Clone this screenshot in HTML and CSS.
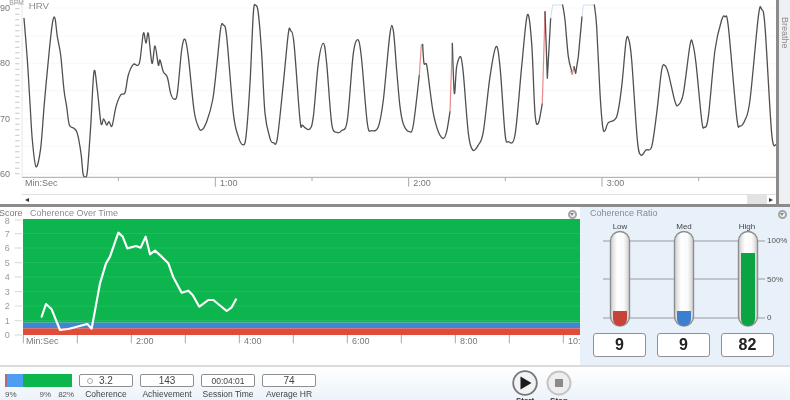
FILE: index.html
```html
<!DOCTYPE html>
<html lang="en">
<head>
<meta charset="utf-8">
<title>HRV Session</title>
<link rel="stylesheet" href="styles.css">
<script src="chart.js" defer></script>
</head>
<body>
<div class="app">
  <section class="hrv">
    <div class="hrv-main">
      <svg class="hrv-chart" viewBox="0 0 2328 582" aria-label="HRV chart">
        <path class="grid" d="M66 24H2328M66 190H2328M66 356H2328M66 522H2328M66 108H2328M66 272H2328M66 438H2328"/>
        <path class="axis-y" d="M66 0V532"/>
        <path class="ticks" d="M52 8V530"/>
        <text class="ax" x="0" y="33">90</text>
        <text class="ax" x="0" y="199">80</text>
        <text class="ax" x="0" y="365">70</text>
        <text class="ax" x="0" y="531">60</text>
        <text class="ax small" x="28" y="15">BPM</text>
        <text class="ax title" x="86" y="28">HRV</text>
        <polyline class="trace" points="72,55 82,180 90,310 97,420 108,500 122,445 133,310 148,150 158,65 165,55 172,110 182,165 192,270 200,320 208,375 222,385 232,400 243,460 249,520 255,530 262,515 272,380 282,215 292,270 303,370 311,357 320,375 327,365 336,378 348,320 362,285 375,278 385,225 400,193 418,190 430,100 438,130 445,100 456,190 465,138 475,195 480,180 490,215 502,232 512,280 522,297 532,280 545,150 555,118 565,170 582,330 595,380 605,390 620,365 638,300 650,200 662,85 670,75 680,110 700,340 715,410 728,434 738,410 750,250 760,40 767,16 775,40 785,160 795,340 810,415 820,428 832,415 850,250 865,100 872,92 882,130 900,360 908,376 928,388 940,350 955,190 970,130 980,190 995,370 1010,397 1025,392 1042,360 1060,160 1075,120 1085,180 1102,370 1115,392 1135,380 1150,300 1170,100 1180,92 1190,210 1200,320 1210,372 1228,395 1240,375 1258,225"/>
        <g transform="translate(1200 0)">
          <polyline class="trace-red" points="58,225 64,135 68,133"/>
          <polyline class="trace" points="68,133 72,190 80,195 90,270 100,340 115,395 130,415 140,395 150,335"/>
          <polyline class="trace-red" points="150,335 157,130"/>
          <polyline class="trace" points="157,130 163,280 170,200 182,170 190,220 205,400 218,450 235,435 250,395 270,230 288,140 300,200 315,400 325,425 345,405 365,200 382,45 395,130 405,340 415,370 427,310"/>
          <polyline class="trace-red" points="427,310 435,35"/>
          <polyline class="trace-raw" points="435,35 442,235 452,55"/>
          <polyline class="trace-pale" points="452,55 458,15 488,15"/>
          <polyline class="trace" points="488,15 495,60 505,170 517,220"/>
          <polyline class="trace-red" points="513,215 517,224 522,200"/>
          <polyline class="trace-raw" points="522,200 527,220 535,170 546,50"/>
          <polyline class="trace-pale" points="546,50 550,15 583,15"/>
          <polyline class="trace" points="583,15 590,80 600,280 608,380 615,392 625,368 650,350 665,260 678,125 686,118 695,180 712,420 723,465 738,450 755,440 770,340 785,210 795,197 805,220 825,305 835,315 850,280 870,135 878,130 888,190 905,360 913,382 925,350 945,150 965,60 975,50 985,80 1010,350 1020,378 1035,360 1050,300 1075,50 1085,28 1095,80 1115,400 1128,435"/>
        </g>
        <path class="x-line" d="M66 532H2328"/>
        <path class="x-ticks" d="M355 532V543M646 532V560M936 532V543M1226 532V560M1516 532V543M1806 532V560M2096 532V543"/>
        <text class="ax" x="75" y="558">Min:Sec</text>
        <text class="ax" x="660" y="558">1:00</text>
        <text class="ax" x="1240" y="558">2:00</text>
        <text class="ax" x="1820" y="558">3:00</text>
      </svg>
      <div class="scrollbar">
        <span class="arrow">&#9666;</span>
        <span class="thumb"></span>
        <span class="arrow">&#9656;</span>
      </div>
    </div>
    <div class="breathe"><span>Breathe</span></div>
  </section>

  <section class="middle">
    <div class="coh">
      <div class="panel-head">
        <span class="score">Score</span>
        <span class="panel-title">Coherence Over Time</span>
        <span class="drop"></span>
      </div>
      <svg class="coh-chart" viewBox="0 57 1740 435" aria-label="Coherence over time chart">
        <rect class="green" x="69" y="57" width="1671" height="311"/>
        <rect class="blue" x="69" y="368" width="1671" height="17"/>
        <rect class="red" x="69" y="385" width="1671" height="20"/>
        <path class="green-grid" d="M69 101H1740M69 144H1740M69 188H1740M69 231H1740M69 275H1740M69 318H1740M69 362H1740"/>
        <path class="y-ticks" d="M44 60H66M44 101H66M44 144H66M44 188H66M44 231H66M44 275H66M44 318H66M44 362H66M44 405H66"/>
        <text class="ax light" x="14" y="72">8</text>
        <text class="ax light" x="14" y="110">7</text>
        <text class="ax light" x="14" y="153">6</text>
        <text class="ax light" x="14" y="197">5</text>
        <text class="ax light" x="14" y="240">4</text>
        <text class="ax light" x="14" y="284">3</text>
        <text class="ax light" x="14" y="327">2</text>
        <text class="ax light" x="14" y="371">1</text>
        <text class="ax light" x="14" y="414">0</text>
        <polyline class="coh-line" points="125,350 138,312 155,328 180,390 205,387 262,372 275,386 300,250 318,190 330,170 355,98 368,110 382,145 408,138 422,143 437,110 450,163 465,152 485,170 505,190 520,232 545,278 565,272 578,285 598,320 625,300 640,300 680,333 695,322 708,298"/>
        <path class="x-ticks" d="M70 405V430M232 405V430M394 405V430M556 405V430M718 405V430M880 405V430M1042 405V430M1204 405V430M1366 405V430M1528 405V430M1690 405V430"/>
        <text class="ax" x="78" y="432">Min:Sec</text>
        <text class="ax" x="408" y="432">2:00</text>
        <text class="ax" x="732" y="432">4:00</text>
        <text class="ax" x="1056" y="432">6:00</text>
        <text class="ax" x="1380" y="432">8:00</text>
        <text class="ax" x="1704" y="432">10:00</text>
      </svg>
    </div>

    <div class="ratio">
      <div class="panel-head ratio-head">
        <span class="panel-title">Coherence Ratio</span>
        <span class="drop"></span>
      </div>
      <svg class="gauges" viewBox="0 0 210 107" aria-label="Coherence ratio gauges">
        <defs>
          <linearGradient id="tube">
            <stop offset="0" stop-color="#cfcfcf"/>
            <stop offset=".35" stop-color="#ffffff"/>
            <stop offset=".7" stop-color="#fafafa"/>
            <stop offset="1" stop-color="#cccccc"/>
          </linearGradient>
        </defs>
        <path class="g-line" d="M23 17H185M23 55H185M23 94H185"/>
        <rect class="tube" x="30.5" y="7.5" width="19" height="94.5" rx="9.5"/>
        <rect class="tube" x="94.5" y="7.5" width="19" height="94.5" rx="9.5"/>
        <rect class="tube" x="158.5" y="7.5" width="19" height="94.5" rx="9.5"/>
        <path class="f-red" d="M33 87H47V95A7 7 0 0 1 33 95Z"/>
        <path class="f-blue" d="M97 87H111V95A7 7 0 0 1 97 95Z"/>
        <path class="f-green" d="M161 29H175V95A7 7 0 0 1 161 95Z"/>
        <text class="g-lab" x="40" y="5">Low</text>
        <text class="g-lab" x="104" y="5">Med</text>
        <text class="g-lab" x="167" y="5">High</text>
        <text class="g-scale" x="187" y="19">100%</text>
        <text class="g-scale" x="187" y="58">50%</text>
        <text class="g-scale" x="187" y="96">0</text>
      </svg>
      <div class="values">
        <div class="value">9</div>
        <div class="value">9</div>
        <div class="value">82</div>
      </div>
    </div>
  </section>

  <footer class="footer">
    <div class="summary">
      <div class="stack"><i class="s-red"></i><i class="s-blue"></i><i class="s-green"></i></div>
      <div class="stack-labels"><span>9%</span><span>9%</span><span>82%</span></div>
    </div>
    <div class="metric"><div class="box coh-box"><i class="dot"></i>3.2</div><span>Coherence</span></div>
    <div class="metric"><div class="box">143</div><span>Achievement</span></div>
    <div class="metric"><div class="box small-val">00:04:01</div><span>Session Time</span></div>
    <div class="metric"><div class="box">74</div><span>Average HR</span></div>
    <div class="controls">
      <div class="ctrl">
        <svg class="btn" viewBox="0 0 26 26"><circle class="btn-ring" cx="13" cy="13" r="11.8"/><path class="btn-play" d="M8.5 6.5L19.5 13L8.5 19.5Z"/></svg>
        <span>Start</span>
      </div>
      <div class="ctrl">
        <svg class="btn" viewBox="0 0 26 26"><circle class="btn-ring off" cx="13" cy="13" r="11.5"/><rect class="btn-stop" x="9" y="9" width="8" height="8"/></svg>
        <span>Stop</span>
      </div>
    </div>
  </footer>
</div>
</body>
</html>
```
FILE: styles.css
```css
* { box-sizing: border-box; }
html, body { margin: 0; padding: 0; background: #fff; }
body { width: 790px; height: 400px; overflow: hidden; font-family: "Liberation Sans", Arial, sans-serif; }
.app { width: 790px; height: 400px; display: flex; flex-direction: column; filter: blur(.45px); color: #555; }

.hrv { height: 207px; display: flex; border-bottom: 3px solid #8b8b8b; flex: none; }
.hrv-main { width: 776px; display: flex; flex-direction: column; }
.hrv-chart { width: 776px; height: 194px; display: block; flex: none; }
.grid { stroke: #f3f3f3; stroke-width: 2; fill: none; }
.axis-y { stroke: #dcdcdc; stroke-width: 2; fill: none; }
.ticks { stroke: #c8c8c8; stroke-width: 13; stroke-dasharray: 3 13.5; fill: none; }
.ax { font-size: 27px; fill: #777; }
.ax.light { fill: #999; }
.ax.small { font-size: 20px; fill: #999; }
.ax.title { font-size: 29px; fill: #8a8a8a; }
.trace, .trace-raw { fill: none; stroke: #505050; stroke-width: 3.9; stroke-linejoin: round; stroke-linecap: round; }
.trace-red { fill: none; stroke: #e78a8a; stroke-width: 3.6; stroke-linecap: round; stroke-linejoin: round; }
.trace-pale { fill: none; stroke: #cfdcf0; stroke-width: 3; stroke-linejoin: round; }
.x-line { stroke: #a8a8a8; stroke-width: 3; fill: none; }
.x-ticks { stroke: #a8a8a8; stroke-width: 3; fill: none; }

.scrollbar { height: 10px; margin-left: 22px; display: flex; align-items: center; justify-content: space-between; border-top: 1px solid #e0e0e0; padding: 0 1px 0 1px; font-size: 8px; color: #333; line-height: 1; }
.scrollbar .arrow { flex: none; width: 8px; text-align: center; }
.scrollbar .thumb { margin-left: auto; width: 20px; height: 9px; background: #e2e4e4; }
.breathe { width: 14px; border-left: 3px solid #8b8b8b; background: #eef1f4; display: flex; justify-content: flex-start; padding: 17px 0 0 1px; }
.breathe span { writing-mode: vertical-rl; font-size: 9px; color: #8a8a8a; }

.middle { display: flex; height: 158px; flex: none; }
.coh { width: 580px; flex: none; display: flex; flex-direction: column; }
.panel-head { height: 12px; display: flex; align-items: center; font-size: 9px; color: #8a8a8a; flex: none; position: relative; }
.score { width: 31px; margin-left: -1px; color: #777; }
.panel-title { color: #8a8a8a; }
.drop { margin-left: auto; margin-right: 3px; margin-top: 2px; width: 9px; height: 9px; border-radius: 50%; background: #f4f4f4; border: 2px solid #a4a4a4; position: relative; }
.drop::after { content: ""; position: absolute; left: 0; top: 1px; border: 2.5px solid transparent; border-top: 3px solid #888; border-bottom: 0; }
.coh-chart { width: 580px; height: 145px; display: block; flex: none; overflow: visible; }
.green { fill: #0cb54d; }
.blue { fill: #3f86d8; }
.red { fill: #e04b3a; }
.green-grid { stroke: #2cc068; stroke-width: 2; fill: none; }
.y-ticks { stroke: #c4c4c4; stroke-width: 2; fill: none; }
.coh-line { fill: none; stroke: #fff; stroke-width: 6.5; stroke-linejoin: round; stroke-linecap: round; }

.ratio { width: 210px; flex: none; background: #e8f1fa; display: flex; flex-direction: column; }
.ratio-head { padding-left: 10px; height: 12px; }
.gauges { width: 210px; height: 107px; display: block; flex: none; margin-top: 5px; overflow: visible; }
.g-line { stroke: #999; stroke-width: 1.2; fill: none; }
.g-lab { font-size: 8px; text-anchor: middle; fill: #444; }
.g-scale { font-size: 8px; fill: #555; }
.tube { fill: url(#tube); stroke: #8e8e8e; stroke-width: 1.4; }
.f-red { fill: #c8423a; }
.f-blue { fill: #3c7fce; }
.f-green { fill: #0ca345; }
.values { display: grid; grid-template-columns: repeat(3, 53px); column-gap: 11px; padding-left: 13px; margin-top: 2px; }
.value { height: 24px; background: #fff; border: 1px solid #909090; border-radius: 3px; display: flex; align-items: center; justify-content: center; font-weight: 700; font-size: 16px; color: #222; }

.footer { flex: 1; display: flex; align-items: flex-start; background: linear-gradient(#ffffff 0, #e9f1f9 100%); border-top: 2px solid #dcdcdc; padding: 7px 0 0 5px; }
.summary { width: 67px; flex: none; margin-right: 7px; }
.stack { height: 13px; display: flex; }
.stack i { display: block; height: 100%; }
.s-red { width: 2px; background: #b06a78; }
.s-blue { width: 16px; background: #4d9df0; }
.s-green { flex: 1; background: #0cb54d; }
.stack-labels { display: flex; font-size: 8px; color: #555; margin-top: 3px; }
.stack-labels span:nth-child(2) { margin-left: 23px; }
.stack-labels span:nth-child(3) { margin-left: 7px; }
.metric { width: 54px; margin-right: 7px; flex: none; display: flex; flex-direction: column; align-items: center; font-size: 8.5px; color: #444; white-space: nowrap; }
.metric span { margin-top: 2px; }
.box { width: 54px; height: 13px; border: 1px solid #8f8f8f; border-radius: 2px; background: #fff; display: flex; align-items: center; justify-content: center; font-size: 10px; color: #444; }
.small-val { font-size: 8.5px; }
.coh-box { justify-content: flex-start; padding-left: 7px; }
.dot { width: 6px; height: 6px; border-radius: 50%; border: 1px solid #aaa; margin-right: 6px; }
.controls { display: flex; gap: 8px; margin-left: 189px; margin-top: -4px; }
.ctrl { width: 26px; display: flex; flex-direction: column; align-items: center; font-size: 8px; color: #333; }
.ctrl span { margin-top: 0; font-weight: 700; line-height: 9px; }
.btn { width: 26px; height: 26px; display: block; }
.btn-ring { fill: #f1f3f5; stroke: #777; stroke-width: 1.8; }
.btn-ring.off { stroke: #c4c4c4; fill: #eeeeee; stroke-width: 2; }
.btn-play { fill: #1d1d1d; }
.btn-stop { fill: #8a8a8a; }
```
FILE: chart.js
```js
// Turn each sampled trace into a smooth Catmull-Rom curve.
document.querySelectorAll('polyline.trace').forEach(function (line) {
  var p = line.getAttribute('points').trim().split(/\s+/).map(function (s) {
    return s.split(',').map(Number);
  });
  var d = 'M' + p[0].join(' ');
  for (var i = 0; i < p.length - 1; i++) {
    var a = p[Math.max(i - 1, 0)], b = p[i], c = p[i + 1], e = p[Math.min(i + 2, p.length - 1)];
    d += 'C' + (b[0] + (c[0] - a[0]) / 6) + ' ' + (b[1] + (c[1] - a[1]) / 6) + ' ' +
      (c[0] - (e[0] - b[0]) / 6) + ' ' + (c[1] - (e[1] - b[1]) / 6) + ' ' + c[0] + ' ' + c[1];
  }
  var path = document.createElementNS('http://www.w3.org/2000/svg', 'path');
  path.setAttribute('class', 'trace');
  path.setAttribute('d', d);
  line.parentNode.replaceChild(path, line);
});
```
